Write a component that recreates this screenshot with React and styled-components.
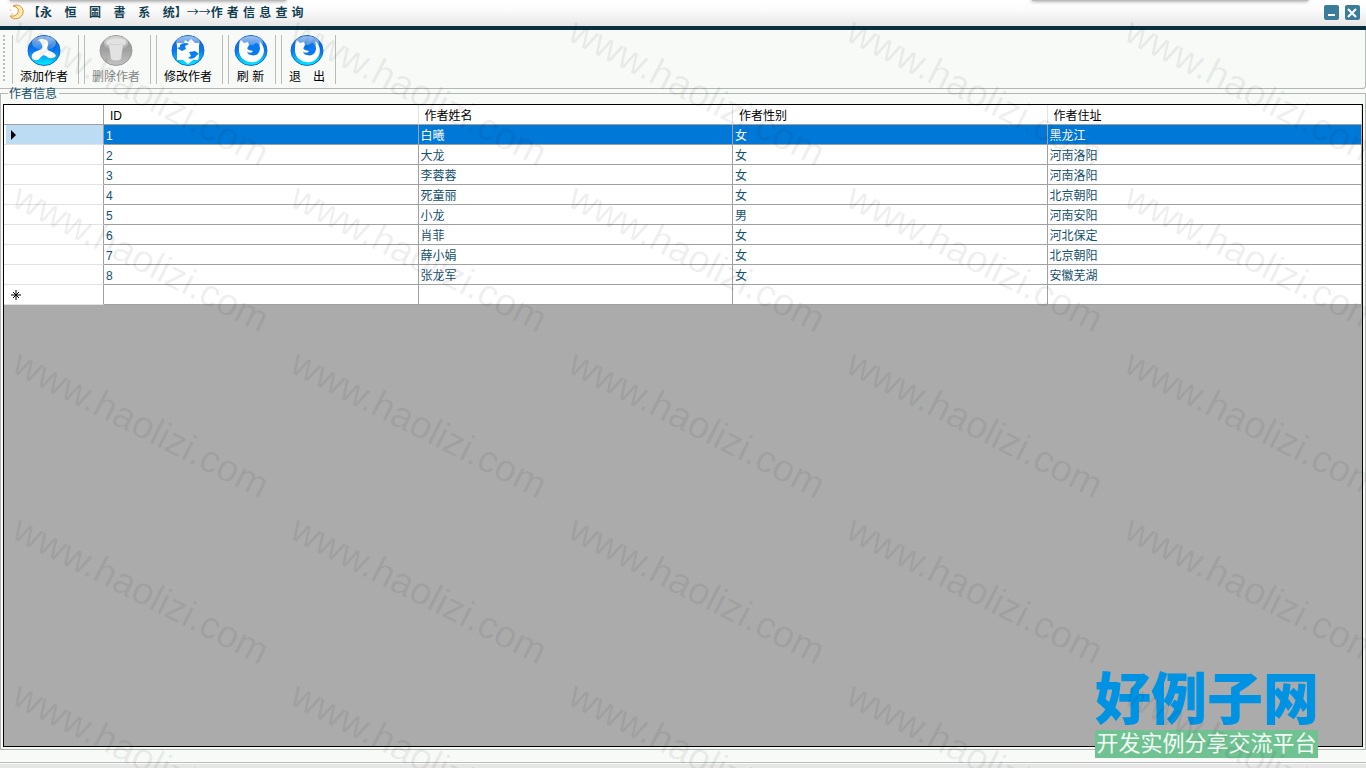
import React from "react";
import styled, { createGlobalStyle, css } from "styled-components";

const GlobalStyle = createGlobalStyle`
  * { box-sizing: border-box; }
  body {
    margin: 0;
    background: #f7faf7;
    font: 12px/16px "Liberation Sans", "Noto Sans CJK SC", sans-serif;
    color: #000;
    overflow: hidden;
  }
`;

const Window = styled.div`
  position: relative;
  display: flex;
  flex-direction: column;
  min-height: 100vh;
  overflow: hidden;
`;

const TitleBar = styled.header`
  position: relative;
  display: flex;
  align-items: center;
  height: 30px;
  padding: 0 6px 2px 8px;
  background: linear-gradient(#fff, #fbfbfb 40%, #e6e6e6);
  border-bottom: 4px solid #0a2f3f;
`;

const TopShade = styled.span`
  position: absolute;
  top: -4px;
  left: ${(p) => p.$left};
  width: 276px;
  height: 5px;
  background: #bbb;
  box-shadow: 0 0 4px #888;
`;

const Title = styled.h1`
  flex: 1;
  margin: 0 0 0 4px;
  font: bold 12px/16px "DejaVu Sans", "Noto Sans CJK SC", sans-serif;
  color: #123e52;
  white-space: pre;
`;

const Arrows = styled.span`
  font-family: "Noto Sans CJK SC", sans-serif;
  font-weight: normal;
`;

const WindowButton = styled.button`
  display: block;
  width: 15px;
  height: 15px;
  margin-left: 6px;
  padding: 0;
  border: 0;
  border-radius: 2px;
  background: #3b7c99;
  svg { display: block; }
`;

const ToolBar = styled.div`
  display: flex;
  height: 59px;
  padding: 5px 0 0 3px;
  border: solid #b4b8b4;
  border-width: 0 1px 1px 0;
  border-radius: 0 0 3px 0;
`;

const Grip = styled.span`
  width: 2px;
  height: 46px;
  margin-right: 7px;
  background: repeating-linear-gradient(#b9bcb9 0 2px, transparent 2px 4px);
`;

const ToolButton = styled.button`
  display: flex;
  flex-direction: column;
  align-items: center;
  width: ${(p) => p.$width}px;
  height: 49px;
  margin-right: 5px;
  padding: 0 3px 0 0;
  border: solid #b8bbb8;
  border-width: 0 1px;
  background: none;
  font: 12px/16px "Liberation Sans", "Noto Sans CJK SC", sans-serif;
  color: #000;
  white-space: pre;
  svg { display: block; flex: none; margin-bottom: 2px; }
  &:disabled { color: #858585; }
`;

const Group = styled.fieldset`
  flex: 1;
  min-width: 0;
  margin: -1px 0 0;
  padding: 6px 2px 2px;
  border: 1px solid #b4b8b4;
`;

const Legend = styled.legend`
  height: 10px;
  margin-left: 5px;
  padding: 0 2px 0 1px;
  line-height: 12px;
  color: #15506c;
`;

const Grid = styled.div`
  min-height: calc(100vh - 125px);
  border: 1px solid #000;
  background: #ababab;
`;

const Table = styled.table`
  width: 100%;
  table-layout: fixed;
  border-collapse: separate;
  border-spacing: 0;
  background: #fff;
`;

const cellBase = css`
  height: 20px;
  line-height: 16px;
  text-align: left;
  font-weight: normal;
`;

const ColumnHead = styled.th`
  ${cellBase}
  padding: 3px 6px 0;
  border-right: 1px solid #e2e2e2;
  border-bottom: 1px solid #a0a0a0;
`;

const Corner = styled.td`
  width: 100px;
  border-right: 1px solid #a0a0a0;
  border-bottom: 1px solid #a0a0a0;
`;

const RowHead = styled.th`
  ${cellBase}
  padding: 1px 0 0 7px;
  border-right: 1px solid #a0a0a0;
  border-bottom: 1px solid #e2e2e2;
  background: ${(p) => (p.$selected ? "#bcdcf4" : "#fff")};
  box-shadow: inset 2px 0 #fff;
  svg { display: block; }
`;

const Cell = styled.td`
  ${cellBase}
  padding: 3px 2px 0;
  border-right: 1px solid #a0a0a0;
  border-bottom: 1px solid #a0a0a0;
  background: ${(p) => (p.$selected ? "#0078d7" : "#fff")};
  color: ${(p) => (p.$selected ? "#fff" : "#15506c")};
`;

const StatusBar = styled.footer`
  height: 18px;
  padding-top: 12px;
  &::after {
    content: "";
    display: block;
    height: 6px;
    border-top: 1px solid #b8bfb8;
    background: linear-gradient(#fafafa 1px, #e6e6e6 1px);
  }
`;

const Brand = styled.div`
  position: absolute;
  right: 48px;
  bottom: 10px;
  width: 223px;
  text-align: center;
  white-space: nowrap;
`;

const BrandName = styled.div`
  padding-bottom: 6px;
  font: 900 56px/58px "Noto Sans CJK SC", sans-serif;
  color: #0093e3;
`;

const BrandTag = styled.div`
  padding-bottom: 6px;
  font: 22px/22px "Noto Sans CJK SC", sans-serif;
  color: #f2fbf5;
  background: #70c292;
`;

const Marks = styled.div`
  position: absolute;
  inset: 0;
  display: grid;
  grid-template-columns: repeat(auto-fill, 278px);
  grid-auto-rows: 166px;
  width: 1668px;
  padding: 6px 0 0 16px;
  pointer-events: none;
  overflow: hidden;
`;

const Mark = styled.span`
  display: block;
  font: 38px/44px "Liberation Sans", sans-serif;
  color: rgba(0, 0, 0, 0.07);
  transform: rotate(27deg);
  transform-origin: 0 22px;
  white-space: nowrap;
`;

function Orb({ id, gray, children }) {
  return (
    <svg width="34" height="32" viewBox="0 0 34 32" aria-hidden="true">
      <defs>
        <linearGradient id={id} x1="0" y1="0" x2="0" y2="1">
          <stop offset="0" stopColor={gray ? "#999" : "#1764cf"} />
          <stop offset=".5" stopColor={gray ? "#a2a2a2" : "#0878f4"} />
          <stop offset="1" stopColor={gray ? "#c4c4c4" : "#00f0ff"} />
        </linearGradient>
        <linearGradient id={id + "g"} x1="0" y1="0" x2="0" y2="1">
          <stop offset="0" stopColor="#fff" stopOpacity=".6" />
          <stop offset="1" stopColor="#fff" stopOpacity=".1" />
        </linearGradient>
      </defs>
      <ellipse cx="17" cy="15.500" rx="16" ry="15" fill={`url(#${id})`} stroke={gray ? "#989898" : "#126bd2"} strokeWidth="1" />
      <ellipse cx="17" cy="8" rx="12" ry="7" fill={`url(#${id}g)`} />
      {children}
    </svg>
  );
}

const AddIcon = () => (
  <Orb id="add">
    <path fill="#fff" d="M11 5c4-2 9-1 10 2 1 3-2 5 0 8 2 2 6 1 8 6-3 3-7 3-10 0-3-2-4 0-6 2-2 3-6 3-8 0-1-4 2-6 5-7 4-1 6-3 5-6-1-3-2-4-4-5z" />
  </Orb>
);

const DeleteIcon = () => (
  <Orb id="del" gray>
    <path fill="#e2e2e2" d="M7 7c1-2 3-2 5-3 3-1 7-1 10 0 3 0 5 1 5 3l-1 3h-2l-2 14c-3 2-7 2-10 0L10 10H8z" />
    <path d="M10 9c5 1 9 1 14 0" fill="none" stroke="#d0d0d0" />
  </Orb>
);

const EditIcon = () => (
  <Orb id="edit">
    <path fill="#fff" d="M6 8h7l1-3 3 2 3-3 4 4h4v13l-1 4h-5l-5 4-5-4H6z" />
    <path fill="#087df0" d="M9 10c2-2 6-3 9-1l-4 2 1 3-4 2-5-3 3-1zM18 17l6-1 4 3-2 1c-2 3-5 5-9 3l3-2z" />
  </Orb>
);

const FoxIcon = ({ id }) => (
  <Orb id={id}>
    <path fill="#fff" d="M7 5l3 3 4-1 1 3 4 1c3-1 5-1 6 1 1-2 1-4 0-6 5 4 6 10 4 14-3 6-8 8-13 7C9 26 5 21 5 15c0-4 0-7 2-10z" />
    <path fill="#0a7af0" d="M15 10l4 0 3-2c4 1 5 6 3 9-1 3-5 4-8 3-2 0-3-1-4-3 3 1 5 1 6-1l-4-1c-2-1-2-2-1-3z" />
  </Orb>
);

const MoonIcon = () => (
  <svg width="16" height="16" viewBox="0 0 16 16" aria-hidden="true">
    <path d="M8 1c5 0 8 4 7 8-1 5-7 7-11 5l-2-2 4 0c3-1 5-4 4-7L8 3 5 2z" fill="#fde3a0" stroke="#d09a45" />
    <path d="M10 2c3 2 4 4 3 7-1 3-3 4-6 4" fill="none" stroke="#fff3c4" strokeWidth="1" />
    <path d="M2 5l1 2M3 10h2" stroke="#ecc982" />
  </svg>
);

const actions = [
  { label: "添加作者", width: 67, icon: <AddIcon /> },
  { label: "删除作者", width: 67, icon: <DeleteIcon />, disabled: true },
  { label: "修改作者", width: 67, icon: <EditIcon /> },
  { label: "刷 新", width: 48, icon: <FoxIcon id="refresh" /> },
  { label: "退\u3000出", width: 55, icon: <FoxIcon id="exit" /> },
];

const columns = ["ID", "作者姓名", "作者性别", "作者住址"];

const authors = [
  ["1", "白曦", "女", "黑龙江"],
  ["2", "大龙", "女", "河南洛阳"],
  ["3", "李蓉蓉", "女", "河南洛阳"],
  ["4", "死童丽", "女", "北京朝阳"],
  ["5", "小龙", "男", "河南安阳"],
  ["6", "肖菲", "女", "河北保定"],
  ["7", "薛小娟", "女", "北京朝阳"],
  ["8", "张龙军", "女", "安徽芜湖"],
];

export default function App() {
  return (
    <Window>
      <GlobalStyle />
      <TitleBar>
        <TopShade $left="10px" />
        <TopShade $left="calc(100% - 334px)" />
        <MoonIcon />
        <Title>
          {"【永   恒   圖   書   系   统】"}
          <Arrows>→→</Arrows>
          {"作 者 信 息 查 询"}
        </Title>
        <WindowButton aria-label="最小化">
          <svg width="15" height="15"><path d="M4 10h7" stroke="#fff" strokeWidth="2" /></svg>
        </WindowButton>
        <WindowButton aria-label="关闭">
          <svg width="15" height="15"><path d="M3 4l8 8M11 4l-8 8" stroke="#fff" strokeWidth="2" /></svg>
        </WindowButton>
      </TitleBar>
      <ToolBar>
        <Grip />
        {actions.map((a) => (
          <ToolButton key={a.label} $width={a.width} disabled={a.disabled}>
            {a.icon}
            {a.label}
          </ToolButton>
        ))}
      </ToolBar>
      <Group>
        <Legend>作者信息</Legend>
        <Grid>
          <Table>
            <thead>
              <tr>
                <Corner />
                {columns.map((c) => <ColumnHead key={c} scope="col">{c}</ColumnHead>)}
              </tr>
            </thead>
            <tbody>
              {authors.map((row, i) => (
                <tr key={row[0]}>
                  <RowHead scope="row" $selected={i === 0}>
                    {i === 0 && <svg width="6" height="10"><path d="M0 0l5 5-5 5z" /></svg>}
                  </RowHead>
                  {row.map((v, j) => <Cell key={j} $selected={i === 0}>{v}</Cell>)}
                </tr>
              ))}
              <tr>
                <RowHead scope="row">
                  <svg width="10" height="10"><path d="M5 0v10M0 5h10M2 2l6 6M8 2l-6 6" stroke="#000" /></svg>
                </RowHead>
                {columns.map((c) => <Cell key={c} />)}
              </tr>
            </tbody>
          </Table>
        </Grid>
      </Group>
      <StatusBar />
      <Brand>
        <BrandName>好例子网</BrandName>
        <BrandTag>开发实例分享交流平台</BrandTag>
      </Brand>
      <Marks aria-hidden="true">
        {Array.from({ length: 25 }, (_, i) => <Mark key={i}>www.haolizi.com</Mark>)}
      </Marks>
    </Window>
  );
}
